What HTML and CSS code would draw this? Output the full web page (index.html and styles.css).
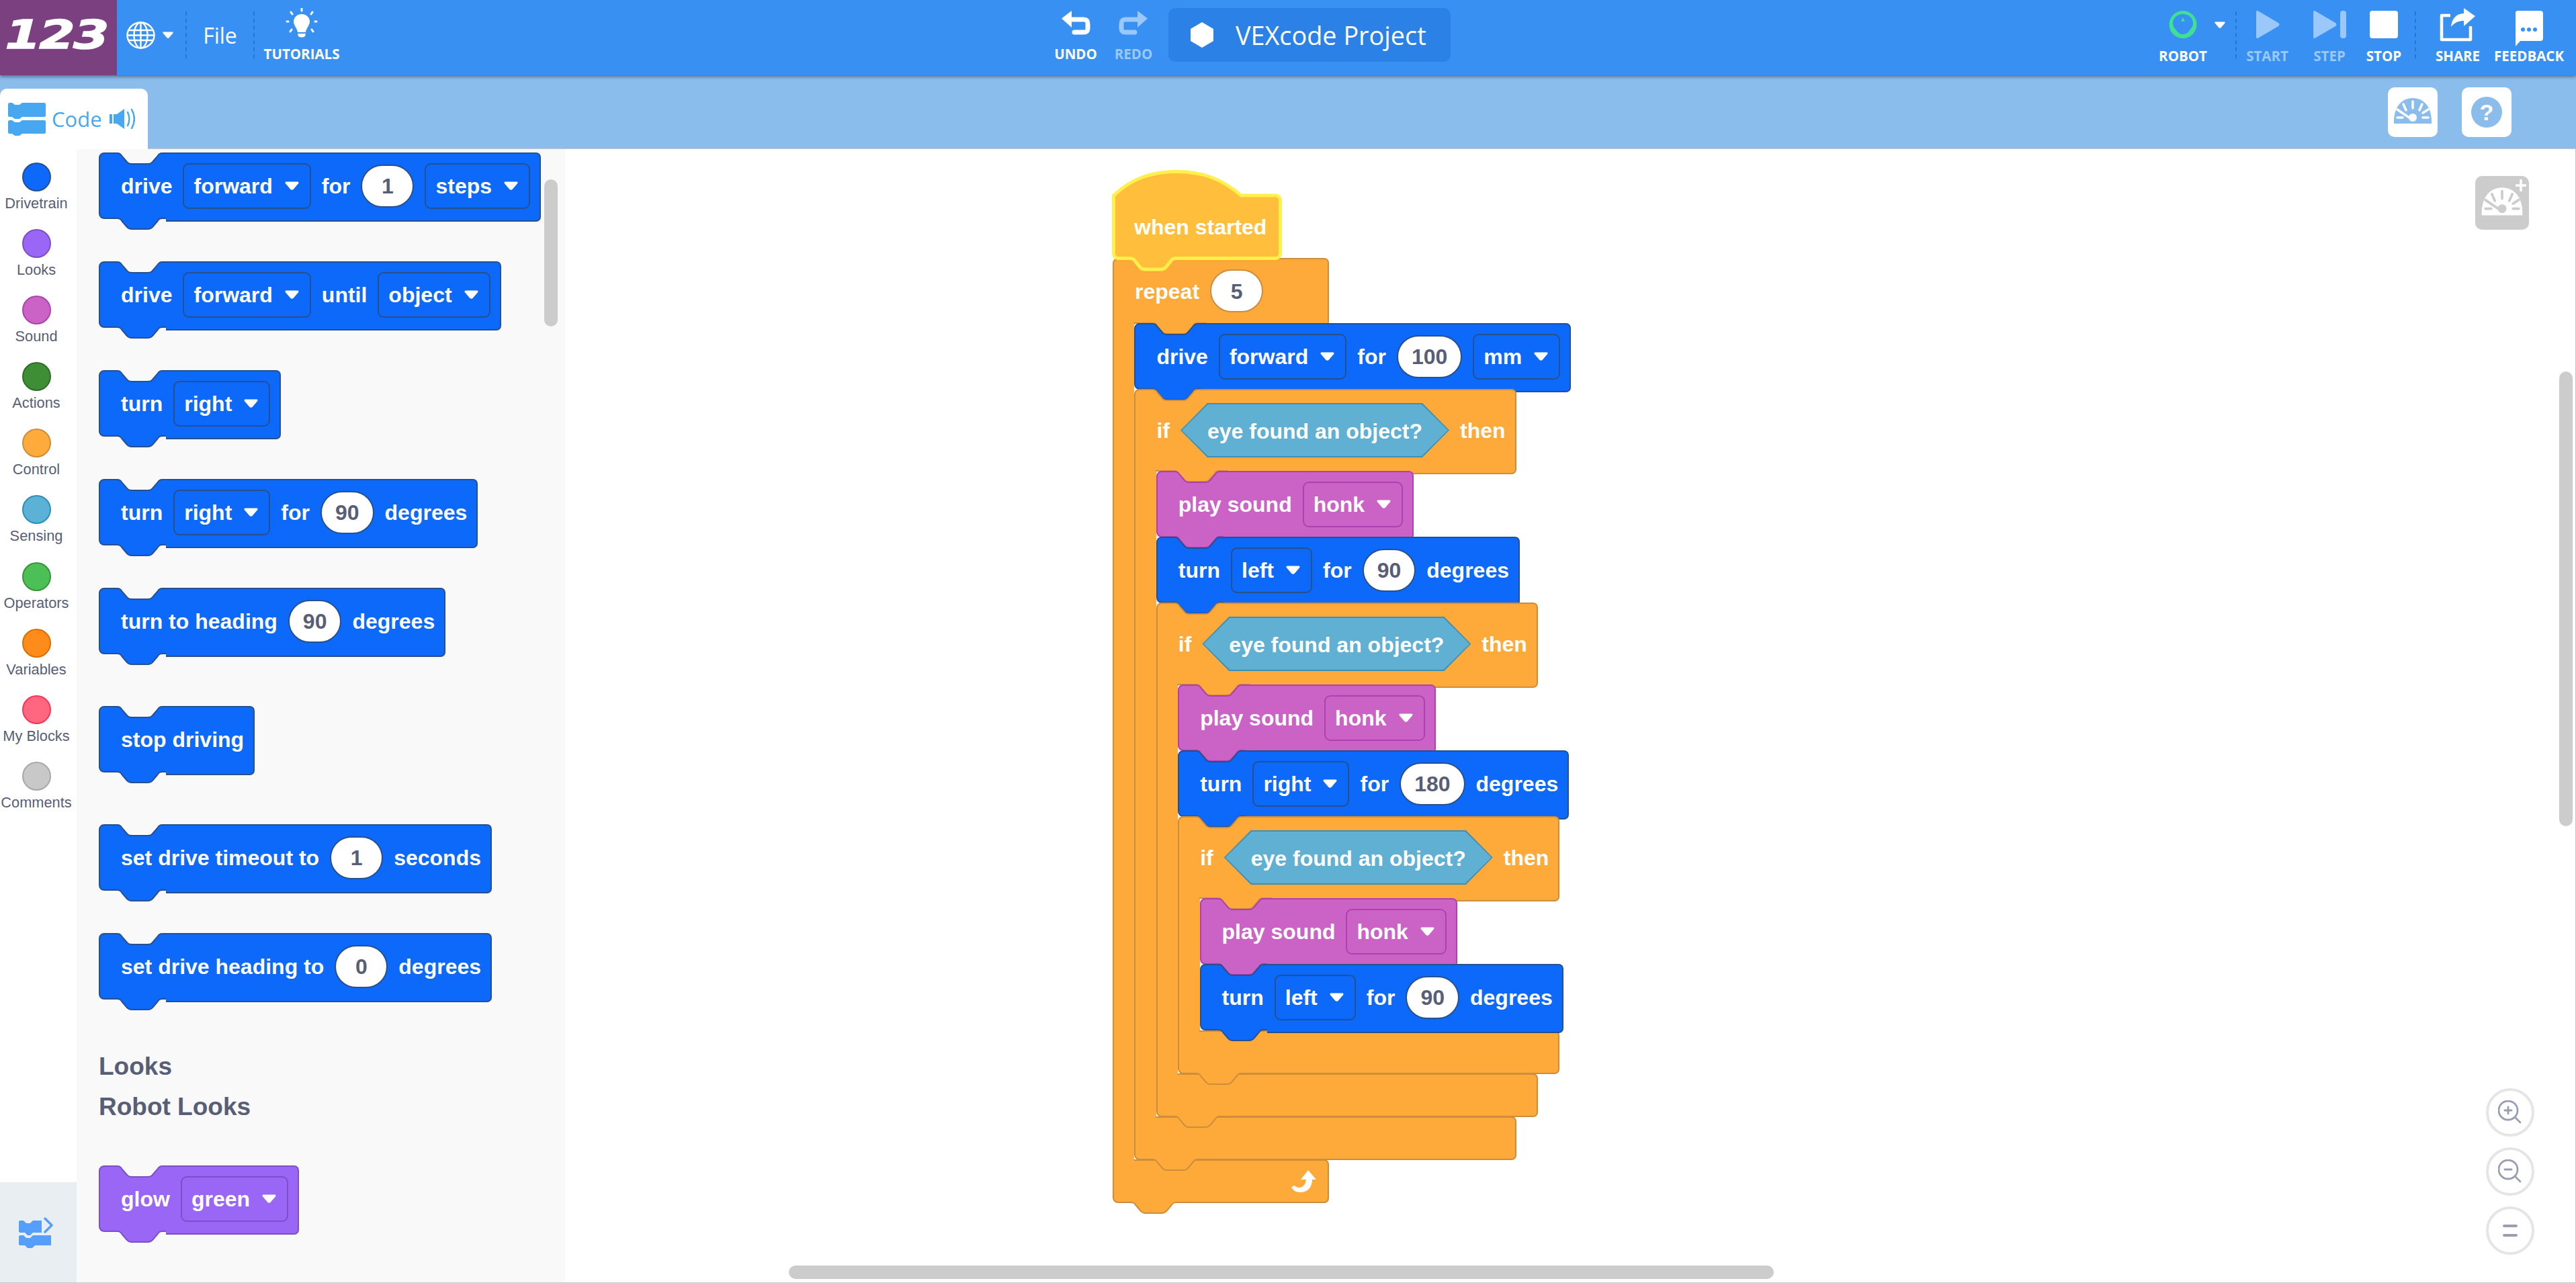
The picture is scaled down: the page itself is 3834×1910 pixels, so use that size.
FILE: index.html
```html
<!DOCTYPE html>
<html lang="en">
<head>
<meta charset="utf-8">
<title>VEXcode 123</title>
<link rel="stylesheet" href="styles.css">
</head>
<body>
<svg class="defs" aria-hidden="true">
  <symbol id="sl" viewBox="0 0 100 116"><path d="M100,1 H95 C90,1 89,3 87,6 L80,14 C78,16.5 76,17 73,17 H49 C46,17 44,16.5 42,14 L35,6 C33,3 32,1 27,1 H8 A7,7 0 0 0 1,8 V91 A7,7 0 0 0 8,98 H27 C32,98 33,100 35,103 L42,111 C44,113.5 46,114 49,114 H73 C76,114 78,113.5 80,111 L87,103 C89,100 90,98 95,98 H100"/></symbol>
  <symbol id="head98" viewBox="0 0 140 116"><path d="M140,1 H95 C90,1 89,3 87,6 L80,14 C78,16.5 76,17 73,17 H49 C46,17 44,16.5 42,14 L35,6 C33,3 32,1 27,1 H8 A7,7 0 0 0 1,8 V98 H32 V97 H59 C64,97 65,99 67,102 L74,110 C76,112.5 78,113 81,113 H105 C108,113 110,112.5 112,110 L119,102 C121,99 122,97 127,97 H140"/></symbol>
  <symbol id="head123" viewBox="0 0 140 141"><path d="M140,1 H95 C90,1 89,3 87,6 L80,14 C78,16.5 76,17 73,17 H49 C46,17 44,16.5 42,14 L35,6 C33,3 32,1 27,1 H8 A7,7 0 0 0 1,8 V123 H32 V122 H59 C64,122 65,124 67,127 L74,135 C76,137.5 78,138 81,138 H105 C108,138 110,137.5 112,135 L119,127 C121,124 122,122 127,122 H140"/></symbol>
  <symbol id="foot" viewBox="0 0 100 82">
    <path stroke="none" d="M1,0 H100 V64 H95 C90,64 89,66 87,69 L80,77 C78,79.5 76,80 73,80 H49 C46,80 44,79.5 42,77 L35,69 C33,66 32,64 27,64 H8 A7,7 0 0 1 1,57 Z"/>
    <path fill="none" d="M1,0 V57 A7,7 0 0 0 8,64 H27 C32,64 33,66 35,69 L42,77 C44,79.5 46,80 49,80 H73 C76,80 78,79.5 80,77 L87,69 C89,66 90,64 95,64 H100 M32,1 H100"/>
  </symbol>
  <symbol id="caret" viewBox="0 0 21 13"><path d="M2,0.5 H19 C20.5,0.5 21,2 20,3.2 L12.5,12 C11.3,13 9.7,13 8.5,12 L1,3.2 C0,2 0.5,0.5 2,0.5 Z"/></symbol>
  <symbol id="gauge" viewBox="0 0 74 74">
    <path class="dome" d="M9,54 C8,30 20,16 37,16 C54,16 66,30 65,54 Z"/>
    <path class="ticks" d="M37,21 V31 M23,25 L27,34 M51,25 L47,34 M14,33 L33,46 M60,33 L52,38 M14,45 H22 M52,45 H60"/>
    <circle class="hub" cx="37" cy="45" r="6"/>
  </symbol>
</svg>

<header class="topbar">
  <div class="logo"><span class="logo-text">123</span></div>
  <div class="globe">
    <svg class="globe-icon" viewBox="0 0 43 41"><g fill="none" stroke="#fff" stroke-width="2.4"><ellipse cx="21.5" cy="20.5" rx="20" ry="19"/><ellipse cx="21.5" cy="20.5" rx="10" ry="19"/><path d="M21.5,1.5 V39.5 M3,13 H40 M1.5,20.5 H41.5 M3,28 H40"/></g></svg>
    <svg class="caret-white"><use href="#caret"/></svg>
  </div>
  <span class="divider"></span>
  <div class="file">File</div>
  <span class="divider"></span>
  <div class="tool tutorials">
    <svg class="tool-icon" width="56" height="56" viewBox="0 0 56 56"><path fill="#fff" d="M28,9 C20,9 16,15 16,20 C16,26 21,29 22,36 H34 C35,29 40,26 40,20 C40,15 36,9 28,9 Z M22,38 H34 L33,42 C30,44 26,44 23,42 Z"/><path stroke="#fff" stroke-width="3" stroke-linecap="round" d="M28,1 V4 M12,6 L14,9 M44,6 L42,9 M6,20 H8 M48,20 H50 M11,35 L13,32 M45,35 L43,32"/></svg>
    <span>TUTORIALS</span>
  </div>

  <div class="tool undo">
    <svg class="tool-icon" width="44" height="56" viewBox="0 0 44 56"><path fill="none" stroke="#fff" stroke-width="7" stroke-linecap="round" d="M14,17 H34 C39,17 40,20 40,24 V30 C40,34 39,36 34,36 H20"/><path fill="#fff" d="M1,15.500 L16,4 V29 Z"/></svg>
    <span>UNDO</span>
  </div>
  <div class="tool redo">
    <svg class="tool-icon" width="44" height="56" viewBox="0 0 44 56"><path fill="none" stroke="#9bc8fa" stroke-width="7" stroke-linecap="round" d="M30,17 H10 C5,17 4,20 4,24 V30 C4,34 5,36 10,36 H24"/><path fill="#9bc8fa" d="M43,15.500 L28,4 V29 Z"/></svg>
    <span>REDO</span>
  </div>
  <div class="project">
    <svg class="project-hex" viewBox="0 0 34 38"><path fill="#fff" d="M17,0 L34,10 V28 L17,38 L0,28 V10 Z"/></svg>
    <span>VEXcode Project</span>
  </div>

  <div class="right-tools">
    <div class="tool tool-r robot">
      <svg class="tool-icon" width="42" height="59" viewBox="0 0 42 59"><circle cx="21" cy="24.500" r="20.500" fill="#3fe091"/><path fill="#3891f2" d="M21,9 C29,9 36,14 36,23 C36,28 33,30 31,33 C29,36 26,39 21,39 C16,39 13,36 11,33 C9,30 6,28 6,23 C6,14 13,9 21,9 Z"/><path fill="#3fe091" d="M21,14 L24,20 H18 Z"/></svg>
      <span>ROBOT</span>
      <svg class="robot-caret"><use href="#caret"/></svg>
    </div>
    <span class="divider"></span>
    <div class="tool tool-r t-start dim">
      <svg class="tool-icon" width="36" height="59" viewBox="0 0 36 59"><path fill="#9bc8fa" d="M1,6 C1,4 3,3 5,5 L34,22 C36,24 36,25 34,27 L5,44 C3,46 1,45 1,43 Z"/></svg>
      <span>START</span>
    </div>
    <div class="tool tool-r t-step dim">
      <svg class="tool-icon" width="50" height="59" viewBox="0 0 50 59"><path fill="#9bc8fa" d="M1,6 C1,4 3,3 5,5 L34,22 C36,24 36,25 34,27 L5,44 C3,46 1,45 1,43 Z"/><rect x="41" y="4" width="9" height="41" rx="4" fill="#9bc8fa"/></svg>
      <span>STEP</span>
    </div>
    <div class="tool tool-r t-stop">
      <svg class="tool-icon" width="42" height="59" viewBox="0 0 42 59"><rect y="4" width="42" height="41" rx="4" fill="#fff"/></svg>
      <span>STOP</span>
    </div>
    <span class="divider"></span>
    <div class="tool tool-r t-share">
      <svg class="tool-icon" width="54" height="59" viewBox="0 0 54 59"><path fill="none" stroke="#fff" stroke-width="4.500" stroke-linejoin="round" d="M16,11 H3 V47 H46 V27"/><path fill="#fff" d="M36,0 L53,12 L36,27 V19 C24,19 20,25 17,28 C18,17 24,8 36,8 Z"/></svg>
      <span>SHARE</span>
    </div>
    <div class="tool tool-r t-feedback">
      <svg class="tool-icon" width="42" height="59" viewBox="0 0 42 59"><path fill="#fff" d="M4,4 H38 C40,4 42,5 42,8 V45 C42,48 40,49 38,49 H8 L1,57 V8 C1,5 2,4 4,4 Z"/><g fill="#3891f2"><circle cx="12" cy="32" r="3"/><circle cx="21" cy="32" r="3"/><circle cx="30" cy="32" r="3"/></g></svg>
      <span>FEEDBACK</span>
    </div>
  </div>
</header>

<nav class="tabbar">
  <div class="code-tab">
    <svg class="code-icon" viewBox="0 0 56 50"><path fill="#47a7f1" d="M2,1 H6 L10,4 H17 L21,1 H54 C55,1 56,2 56,3 V20 C56,21 55,22 54,22 H21 L17,25 H10 L6,22 H2 C1,22 0,21 0,20 V3 C0,2 1,1 2,1 Z M2,27 H6 L10,30 H17 L21,27 H54 C55,27 56,28 56,29 V45 C56,46 55,47 54,47 H21 L17,50 H10 L6,47 H2 C1,47 0,46 0,45 V29 C0,28 1,27 2,27 Z"/></svg>
    <span class="code-label">Code</span>
    <svg class="speaker" viewBox="0 0 38 32"><path fill="#47a7f1" d="M0,9 H4 V23 H0 Z M6,9 H11 L22,1 V31 L11,23 H6 Z"/><path fill="none" stroke="#47a7f1" stroke-width="2.500" stroke-linecap="round" d="M27,6 C30,12 30,20 27,26 M33,2 C38,11 38,21 33,30"/></svg>
  </div>
  <div class="tab-actions">
    <button class="square-btn" type="button"><svg class="gauge-blue"><use href="#gauge"/></svg></button>
    <button class="square-btn" type="button"><svg class="help-icon" viewBox="0 0 46 46"><circle cx="23" cy="23" r="23" fill="#8abcec"/><text x="23" y="35" text-anchor="middle" class="help-mark">?</text></svg></button>
  </div>
</nav>

<main class="main">
  <aside class="cats">
    <ul class="cat-list">
      <li class="cat"><i class="dot d-blue"></i>Drivetrain</li>
      <li class="cat"><i class="dot d-purple"></i>Looks</li>
      <li class="cat"><i class="dot d-pink"></i>Sound</li>
      <li class="cat"><i class="dot d-green"></i>Actions</li>
      <li class="cat"><i class="dot d-orange"></i>Control</li>
      <li class="cat"><i class="dot d-sky"></i>Sensing</li>
      <li class="cat"><i class="dot d-lime"></i>Operators</li>
      <li class="cat"><i class="dot d-var"></i>Variables</li>
      <li class="cat"><i class="dot d-rose"></i>My Blocks</li>
      <li class="cat"><i class="dot d-grey"></i>Comments</li>
    </ul>
    <div class="cats-foot">
      <svg class="ext-icon" viewBox="0 0 52 46"><path fill="#559ffb" d="M2,5 H7 L11,9 L17,9 L21,5 H34 V23 H21 L17,27 H13 L9,23 H2 C1,23 0,22 0,21 V7 C0,6 1,5 2,5 Z M2,27 H7 L11,31 H17 L21,27 H48 V42 H24 L20,46 H13 L9,42 H2 C1,42 0,41 0,40 V29 C0,28 1,27 2,27 Z"/><path fill="none" stroke="#559ffb" stroke-width="3.500" stroke-linecap="round" stroke-linejoin="round" d="M39,2 L49,12 L39,22"/></svg>
    </div>
  </aside>

  <section class="palette">
    <div class="block blue"><svg class="sl"><use href="#sl"/></svg><span>drive</span><span class="dd">forward<svg class="dd-caret"><use href="#caret"/></svg></span><span>for</span><span class="num">1</span><span class="dd">steps<svg class="dd-caret"><use href="#caret"/></svg></span></div>
    <div class="block blue"><svg class="sl"><use href="#sl"/></svg><span>drive</span><span class="dd">forward<svg class="dd-caret"><use href="#caret"/></svg></span><span>until</span><span class="dd">object<svg class="dd-caret"><use href="#caret"/></svg></span></div>
    <div class="block blue"><svg class="sl"><use href="#sl"/></svg><span>turn</span><span class="dd">right<svg class="dd-caret"><use href="#caret"/></svg></span></div>
    <div class="block blue"><svg class="sl"><use href="#sl"/></svg><span>turn</span><span class="dd">right<svg class="dd-caret"><use href="#caret"/></svg></span><span>for</span><span class="num">90</span><span>degrees</span></div>
    <div class="block blue wide-gap"><svg class="sl"><use href="#sl"/></svg><span>turn to heading</span><span class="num">90</span><span>degrees</span></div>
    <div class="block blue wide-gap"><svg class="sl"><use href="#sl"/></svg><span>stop driving</span></div>
    <div class="block blue"><svg class="sl"><use href="#sl"/></svg><span>set drive timeout to</span><span class="num">1</span><span>seconds</span></div>
    <div class="block blue"><svg class="sl"><use href="#sl"/></svg><span>set drive heading to</span><span class="num">0</span><span>degrees</span></div>
    <h2 class="pal-title">Looks</h2>
    <h2 class="pal-title pal-sub">Robot Looks</h2>
    <div class="block purple"><svg class="sl"><use href="#sl"/></svg><span>glow</span><span class="dd">green<svg class="dd-caret"><use href="#caret"/></svg></span></div>
    <div class="pal-thumb"></div>
  </section>

  <section class="workspace">
    <div class="script">
      <div class="hat">
        <svg class="hat-shape" viewBox="0 0 253 151"><path d="M2.500,38 C30,12 60,2.500 96,2.500 C135,2.500 165,14 192,38 H243 A7,7 0 0 1 250.500,45.500 V124 A7,7 0 0 1 243,131.500 H95 C90,131.500 89,133.500 87,136.500 L80,145 C78,147.500 76,148 73,148 H49 C46,148 44,147.500 42,145 L35,136.500 C33,133.500 32,131.500 27,131.500 H9 A7,7 0 0 1 2.500,124 Z"/></svg>
        <span>when started</span>
      </div>
      <div class="c orange">
        <div class="block head repeat-head"><svg class="hl h98"><use href="#head98"/></svg><span>repeat</span><span class="num">5</span></div>
        <div class="c-body">
          <div class="spine"></div>
          <div class="stack">
            <div class="block blue"><svg class="sl"><use href="#sl"/></svg><span>drive</span><span class="dd">forward<svg class="dd-caret"><use href="#caret"/></svg></span><span>for</span><span class="num">100</span><span class="dd">mm<svg class="dd-caret"><use href="#caret"/></svg></span></div>
            <div class="c orange">
              <div class="block head tall"><svg class="hl h123"><use href="#head123"/></svg><span>if</span><span class="hex"><span>eye found an object?</span></span><span>then</span></div>
              <div class="c-body">
                <div class="spine"></div>
                <div class="stack">
                  <div class="block pink"><svg class="sl"><use href="#sl"/></svg><span>play sound</span><span class="dd">honk<svg class="dd-caret"><use href="#caret"/></svg></span></div>
                  <div class="block blue"><svg class="sl"><use href="#sl"/></svg><span>turn</span><span class="dd">left<svg class="dd-caret"><use href="#caret"/></svg></span><span>for</span><span class="num">90</span><span>degrees</span></div>
                  <div class="c orange">
                    <div class="block head tall"><svg class="hl h123"><use href="#head123"/></svg><span>if</span><span class="hex"><span>eye found an object?</span></span><span>then</span></div>
                    <div class="c-body">
                      <div class="spine"></div>
                      <div class="stack">
                        <div class="block pink"><svg class="sl"><use href="#sl"/></svg><span>play sound</span><span class="dd">honk<svg class="dd-caret"><use href="#caret"/></svg></span></div>
                        <div class="block blue"><svg class="sl"><use href="#sl"/></svg><span>turn</span><span class="dd">right<svg class="dd-caret"><use href="#caret"/></svg></span><span>for</span><span class="num">180</span><span>degrees</span></div>
                        <div class="c orange">
                          <div class="block head tall"><svg class="hl h123"><use href="#head123"/></svg><span>if</span><span class="hex"><span>eye found an object?</span></span><span>then</span></div>
                          <div class="c-body">
                            <div class="spine"></div>
                            <div class="stack">
                              <div class="block pink"><svg class="sl"><use href="#sl"/></svg><span>play sound</span><span class="dd">honk<svg class="dd-caret"><use href="#caret"/></svg></span></div>
                              <div class="block blue"><svg class="sl"><use href="#sl"/></svg><span>turn</span><span class="dd">left<svg class="dd-caret"><use href="#caret"/></svg></span><span>for</span><span class="num">90</span><span>degrees</span></div>
                            </div>
                          </div>
                          <div class="foot"><svg class="fl"><use href="#foot"/></svg></div>
                        </div>
                      </div>
                    </div>
                    <div class="foot"><svg class="fl"><use href="#foot"/></svg></div>
                  </div>
                </div>
              </div>
              <div class="foot"><svg class="fl"><use href="#foot"/></svg></div>
            </div>
          </div>
        </div>
        <div class="foot"><svg class="fl"><use href="#foot"/></svg><svg class="loop-arrow" viewBox="0 0 38 33"><path fill="#fff" d="M25,0 L37,14 H31 C31,26 24,33 13,33 C7,33 2,30 0,25 L5,23 C8,27 20,29 22,14 H14 Z"/></svg></div>
      </div>
    </div>

    <button class="add-gauge" type="button"><svg class="gauge-grey"><use href="#gauge"/></svg><svg class="plus" viewBox="0 0 16 18"><path d="M8,1 V17 M1,9 H15" stroke="#fff" stroke-width="3.500" stroke-linecap="round"/></svg></button>
    <div class="zooms">
      <button class="zoom-btn" type="button"><svg viewBox="0 0 36 36"><g fill="none" stroke="#9a9eb2" stroke-width="2.800" stroke-linecap="round"><circle cx="15" cy="15" r="14"/><path d="M26,26 L33,33 M15,10 V20 M10,15 H20"/></g></svg></button>
      <button class="zoom-btn" type="button"><svg viewBox="0 0 36 36"><g fill="none" stroke="#9a9eb2" stroke-width="2.800" stroke-linecap="round"><circle cx="15" cy="15" r="14"/><path d="M26,26 L33,33 M10,15 H20"/></g></svg></button>
      <button class="zoom-btn" type="button"><svg viewBox="0 0 36 36"><path d="M9,11 H27 M9,25 H27" stroke="#9a9eb2" stroke-width="4" stroke-linecap="round"/></svg></button>
    </div>
    <div class="ws-vbar"></div>
    <div class="ws-hbar"></div>
  </section>
</main>
</body>
</html>
```

FILE: styles.css
```css
* { box-sizing: border-box; }
html, body { margin: 0; padding: 0; }
body { width: 3834px; height: 1910px; overflow: hidden; background: #fff; font-family: "Liberation Sans", Arial, sans-serif; display: flex; flex-direction: column; }
.defs { position: absolute; width: 0; height: 0; }

/* top bar */
.topbar { position: relative; z-index: 5; flex: none; display: flex; height: 112px; background: #3891f2; box-shadow: 0 2px 5px rgba(0,0,0,.45); color: #fff; font-family: "Open Sans", "Noto Sans", sans-serif; }
.logo { flex: none; width: 174px; background: #7a4080; display: flex; align-items: center; justify-content: center; padding: 0 6px 9px 0; overflow: hidden; }
.logo-text { font: italic 700 59px/1 "DejaVu Sans", sans-serif; transform: scaleX(1.3); letter-spacing: -2px; color: #fff; -webkit-text-stroke: 1.5px #fff; }
.globe { flex: none; width: 102px; padding: 32px 0 0 14px; display: flex; }
.globe-icon { width: 43px; height: 41px; }
.caret-white { width: 18px; height: 10px; margin: 15px 0 0 10px; fill: #fff; }
.divider { flex: none; width: 0; height: 70px; margin-top: 17px; border-left: 2px dashed #2a76cf; }
.file { flex: none; width: 99px; padding-top: 31px; text-align: center; font-size: 32px; line-height: 44px; }
.tool { flex: none; display: flex; flex-direction: column; align-items: center; padding-top: 12px; font-size: 20.500px; font-weight: 700; line-height: 24px; }
.tool-icon { display: block; flex: none; }
.tutorials { width: 140px; }
.undo { width: 86px; margin-left: 1039px; }
.redo { width: 86px; color: #9bc8fa; }
.project { flex: none; display: flex; align-items: center; width: 420px; height: 80px; margin: 12px 0 0 9px; padding-left: 33px; gap: 33px; background: #2c81e6; border-radius: 10px; font-size: 37.800px; }
.project-hex { width: 34px; height: 38px; }
.right-tools { margin-left: auto; display: flex; padding-right: 26px; }
.robot { position: relative; width: 140px; margin-right: 8px; }
.robot-caret { position: absolute; left: 116px; top: 32px; width: 18px; height: 10px; fill: #fff; }
.dim { color: #9bc8fa; }
.t-start { width: 91px; }
.t-step { width: 94px; }
.t-stop { width: 68px; margin-right: 12px; }
.t-share { width: 124px; }
.t-feedback { width: 88px; }

/* tab bar */
.tabbar { flex: none; height: 110px; display: flex; background: #8abcec; border-bottom: 1px solid #c9c9c9; }
.code-tab { flex: none; display: flex; align-items: center; width: 220px; height: 90px; margin-top: 20px; padding-left: 12px; background: #fff; border-radius: 10px 10px 0 0; color: #4ba7ee; font-family: "Open Sans", sans-serif; font-size: 31px; }
.code-icon { width: 56px; height: 50px; }
.code-label { margin-left: 9px; }
.speaker { width: 38px; height: 32px; margin-left: 11px; }
.tab-actions { margin-left: auto; display: flex; gap: 36px; padding: 18px 96px 0 0; }
.square-btn { width: 74px; height: 74px; padding: 0; border: 0; border-radius: 10px; background: #fff; display: flex; align-items: center; justify-content: center; }
.gauge-blue { width: 74px; height: 74px; --dome: #8abcec; --tick: #fff; }
.help-icon { width: 46px; height: 46px; }
.help-mark { font: 700 34px "Liberation Sans", sans-serif; fill: #fff; }
.dome { fill: var(--dome); }
.ticks { fill: none; stroke: var(--tick); stroke-width: 3.500; stroke-linecap: round; }
.hub { fill: var(--tick); }

/* main */
.main { flex: 1; min-height: 0; display: flex; border-bottom: 1px solid #c9c9c9; }
.cats { flex: none; width: 114px; display: flex; flex-direction: column; background: #fff; }
.cat-list { flex: 1; margin: 0; padding: 20px 6px 0 0; list-style: none; }
.cat { height: 99.100px; display: flex; flex-direction: column; align-items: center; font-size: 21.800px; line-height: 28px; color: #575e75; white-space: nowrap; }
.dot { display: block; width: 43px; height: 43px; margin-bottom: 4px; border-radius: 50%; border: 2px solid; }
.d-blue { background: #0d69f9; border-color: #26508f; }
.d-purple { background: #9966f6; border-color: #7a50c4; }
.d-pink { background: #cb63c7; border-color: #b040b0; }
.d-green { background: #3e8e36; border-color: #2f6b29; }
.d-orange { background: #ffab3b; border-color: #cc8e3c; }
.d-sky { background: #5cb1d6; border-color: #2e8eb8; }
.d-lime { background: #4cbf56; border-color: #389438; }
.d-var { background: #ff8c1a; border-color: #db6e00; }
.d-rose { background: #ff6680; border-color: #ff3355; }
.d-grey { background: #c8c8c8; border-color: #a8a8a8; }
.cats-foot { flex: none; height: 149px; padding: 52px 0 0 28px; background: #e9eef2; }
.ext-icon { display: block; width: 52px; height: 46px; }

.palette { position: relative; flex: none; width: 727px; padding: 5px 0 0 33px; background: #f9f9f9; overflow: hidden; }
.palette .block { margin-bottom: 63px; }
.palette .wide-gap { margin-bottom: 77px; }
.pal-title { margin: 0; font-size: 37px; line-height: 60px; font-weight: 700; color: #575e75; }
.pal-title:first-of-type { margin-top: 70px; }
.pal-sub { margin-bottom: 57px; }
.pal-thumb { position: absolute; left: 696px; top: 45px; width: 20px; height: 219px; border-radius: 10px; background: #ccc; }

/* blocks */
.blue { --c: #0d69f9; --s: #26508f; }
.purple { --c: #9966f6; --s: #7a50c4; }
.pink { --c: #cb63c7; --s: #b040b0; }
.orange { --c: #feaa3b; --s: #cc8e3c; }
.block { position: relative; display: flex; align-items: center; gap: 16px; width: fit-content; height: 99px; margin-bottom: -1px; padding: 0 16px 0 33px; color: #fff; font-size: 32px; font-weight: 700; white-space: nowrap; }
.block > span { position: relative; z-index: 1; top: 1px; }
.block::after { content: ""; position: absolute; left: 100px; right: 0; top: 0; height: 99px; background: var(--c); border: 2px solid var(--s); border-left: 0; border-radius: 0 7px 7px 0; }
.sl { position: absolute; left: 0; top: 0; width: 100px; height: 116px; fill: var(--c); stroke: var(--s); stroke-width: 2; overflow: visible; z-index: 1; }
.block > .dd, .block > .num { top: 0; padding-top: 2px; }
.dd { display: flex; align-items: center; gap: 18px; height: 68px; padding: 0 16px 0 14px; border: 2px solid var(--s); border-radius: 9px; background: var(--c); }
.dd-caret { width: 21px; height: 13px; margin-top: -3px; fill: #fff; }
.num { display: flex; align-items: center; justify-content: center; min-width: 79px; height: 64px; padding: 0 20px; border: 2px solid var(--s); border-radius: 32px; background: #fff; color: #575e75; }

.workspace { position: relative; flex: 1; padding: 31px 0 0 814px; background: #fff; border-right: 1px solid #c4c4c4; overflow: hidden; }
.script { display: flex; flex-direction: column; align-items: flex-start; padding-left: 1px; }
.hat { position: relative; z-index: 3; width: 253px; height: 131px; margin-left: -1px; padding: 39px 0 0 33px; display: flex; align-items: center; color: #fff; font-size: 32px; font-weight: 700; white-space: nowrap; }
.hat > span { position: relative; }
.hat-shape { position: absolute; left: 0; top: 0; width: 253px; height: 151px; fill: #ffbf3c; stroke: #fff04c; stroke-width: 5; }
.c { display: flex; flex-direction: column; width: fit-content; margin-bottom: -1px; }
.c > .block { width: auto; }
.head { height: 98px; }
.head.tall { height: 123px; }
.c > .repeat-head { width: 322px; }
.head::after { left: 140px; height: 100%; }
.head .num, .head .hex { flex: none; }
.hl { position: absolute; left: 0; top: 0; width: 140px; fill: var(--c); stroke: var(--s); stroke-width: 2; overflow: visible; z-index: 1; }
.h98 { height: 116px; }
.h123 { height: 141px; }
.c-body { position: relative; z-index: 2; display: flex; width: 0; }
.spine { flex: none; width: 32.400px; background: var(--c); border-left: 2px solid var(--s); }
.stack { display: flex; flex-direction: column; align-items: flex-start; flex: none; padding-bottom: 1px; }
.foot { position: relative; display: flex; align-items: center; justify-content: flex-end; height: 65px; margin-bottom: -1px; padding-right: 18px; }
.foot::after { content: ""; position: absolute; left: 100px; right: 0; top: 0; bottom: 0; background: var(--c); border: 2px solid var(--s); border-left: 0; border-radius: 0 7px 7px 0; }
.fl { position: absolute; left: 0; top: 0; width: 100px; height: 82px; fill: var(--c); stroke: var(--s); stroke-width: 2; overflow: visible; }
.loop-arrow { position: relative; z-index: 1; width: 38px; height: 33px; }
.hex { position: relative; display: flex; align-items: center; height: 81px; padding: 0 40px; background: #3e8fb5; clip-path: polygon(40px 0, calc(100% - 40px) 0, 100% 50%, calc(100% - 40px) 100%, 40px 100%, 0 50%); }
.block > .hex { top: 0; }
.hex::before { content: ""; position: absolute; inset: 2px; background: #5fb0d2; clip-path: polygon(39px 0, calc(100% - 39px) 0, 100% 50%, calc(100% - 39px) 100%, 39px 100%, 0 50%); }
.hex > span { position: relative; top: 2px; }

.add-gauge { position: absolute; left: 2843px; top: 40px; width: 80px; height: 80px; padding: 0; border: 0; border-radius: 10px; background: #ccc; }
.gauge-grey { display: block; width: 80px; height: 80px; --dome: #fff; --tick: #ccc; }
.plus { position: absolute; right: 4px; top: 5px; width: 16px; height: 18px; }
.zooms { position: absolute; left: 2859px; top: 1398px; display: flex; flex-direction: column; gap: 16px; }
.zoom-btn { display: flex; align-items: center; justify-content: center; width: 72px; height: 72px; padding: 0; border: 4.500px solid #e5e5e5; border-radius: 50%; background: #fff; }
.zoom-btn svg { width: 36px; height: 36px; }
.ws-vbar { position: absolute; right: 4px; top: 331px; width: 20px; height: 677px; border-radius: 10px; background: #ccc; }
.ws-hbar { position: absolute; left: 333px; top: 1662px; width: 1466px; height: 20px; border-radius: 10px; background: #ccc; }
```
